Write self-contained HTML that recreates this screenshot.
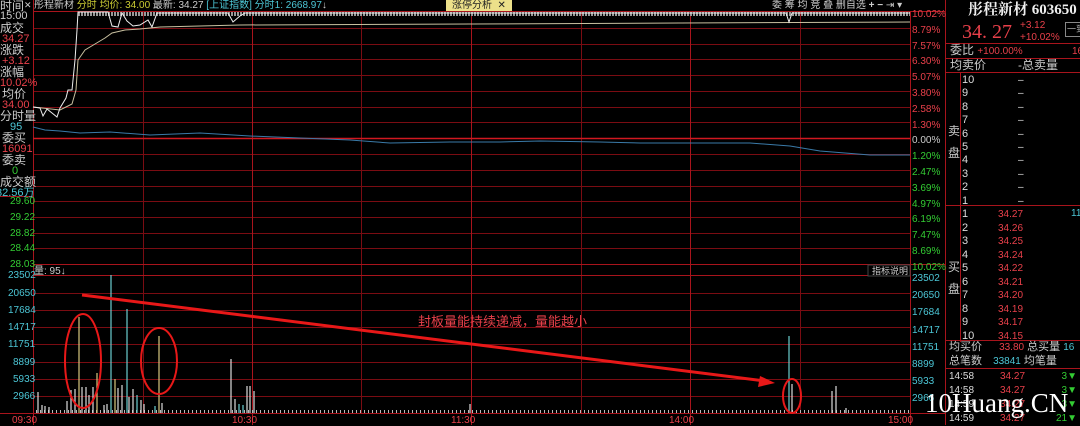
<!DOCTYPE html>
<html><head><meta charset="utf-8"><style>
body{margin:0;background:#000;width:1080px;height:425px;overflow:hidden;position:relative;font-family:"Liberation Sans","Noto Sans CJK SC",sans-serif}
.t{position:absolute;font-size:11px;line-height:11px;white-space:nowrap}
.w{color:#ccc}.r{color:#e8404a}.g{color:#3c3}.c{color:#4cc6d6}.y{color:#ddd}
.L{font-size:12px;line-height:12px}
</style></head><body>
<svg width="1080" height="425" style="position:absolute;left:0;top:0">
<g stroke="#7a0c12" stroke-width="1">
<line x1="33" y1="28.5" x2="910" y2="28.5"/><line x1="33" y1="44.5" x2="910" y2="44.5"/><line x1="33" y1="59.5" x2="910" y2="59.5"/><line x1="33" y1="75.5" x2="910" y2="75.5"/><line x1="33" y1="91.5" x2="910" y2="91.5"/><line x1="33" y1="107.5" x2="910" y2="107.5"/><line x1="33" y1="122.5" x2="910" y2="122.5"/>
<line x1="33" y1="154.5" x2="910" y2="154.5"/><line x1="33" y1="170.5" x2="910" y2="170.5"/><line x1="33" y1="186.5" x2="910" y2="186.5"/><line x1="33" y1="201.5" x2="910" y2="201.5"/><line x1="33" y1="217.5" x2="910" y2="217.5"/><line x1="33" y1="233.5" x2="910" y2="233.5"/><line x1="33" y1="248.5" x2="910" y2="248.5"/>
<line x1="33" y1="293.5" x2="910" y2="293.5"/><line x1="33" y1="310.5" x2="910" y2="310.5"/><line x1="33" y1="327.5" x2="910" y2="327.5"/><line x1="33" y1="344.5" x2="910" y2="344.5"/><line x1="33" y1="362.5" x2="910" y2="362.5"/><line x1="33" y1="379.5" x2="910" y2="379.5"/><line x1="33" y1="396.5" x2="910" y2="396.5"/>
<line x1="143.5" y1="11" x2="143.5" y2="413"/><line x1="361.5" y1="11" x2="361.5" y2="413"/><line x1="581.5" y1="11" x2="581.5" y2="413"/><line x1="800.5" y1="11" x2="800.5" y2="413"/>
</g>
<g stroke="#a8141c" stroke-width="1">
<line x1="33" y1="11.5" x2="945" y2="11.5"/><line x1="33" y1="264.5" x2="945" y2="264.5"/><line x1="33" y1="275.5" x2="910" y2="275.5"/><line x1="0" y1="413.5" x2="945" y2="413.5"/>
<line x1="33.5" y1="0" x2="33.5" y2="425"/><line x1="252.5" y1="11" x2="252.5" y2="425"/><line x1="471.5" y1="11" x2="471.5" y2="425"/><line x1="690.5" y1="11" x2="690.5" y2="425"/><line x1="910.5" y1="11" x2="910.5" y2="425"/><line x1="945.5" y1="0" x2="945.5" y2="425"/>
<line x1="0" y1="196.5" x2="33" y2="196.5"/>
</g>
<line x1="33" y1="138.5" x2="910" y2="138.5" stroke="#d01820" stroke-width="1.5"/>
<line x1="78" y1="14" x2="910" y2="14" stroke="#999" stroke-width="4" stroke-dasharray="2 1"/>
<polyline fill="none" stroke="#c8c0a0" stroke-width="1" points="33,107 60,110 72,104 76,90 78,60 85,50 95,44 105,38 112,33 125,30 140,29 160,27 240,25 471,24 680,23 910,22"/>
<polyline fill="none" stroke="#eee" stroke-width="1" points="33,107 40,108 43,116 47,109 52,113 57,117 60,108 66,98 68,90 72,90 75,60 77,30 78,12 108,12 112,26 118,27 122,13 127,21 133,26 140,25 148,20 152,27 157,13 228,13 233,22 240,16 245,13 786,13 789,22 792,13 910,13"/>
<polyline fill="none" stroke="#3a7aa8" stroke-width="1" points="33,127 45,130 60,131 80,133 110,132 150,135 200,133 250,136 300,138 350,140 390,143 450,142 500,142 540,141 600,142 640,143 700,143 750,143 790,146 820,151 870,155 910,155"/>
<line x1="36" y1="411.5" x2="910" y2="411.5" stroke="#bbb" stroke-width="3" stroke-dasharray="1 3"/>
<g stroke-width="1.2">
<g stroke="#ddd">
<line x1="38" y1="413" x2="38" y2="392"/><line x1="42" y1="413" x2="42" y2="405"/><line x1="45" y1="413" x2="45" y2="406"/><line x1="49" y1="413" x2="49" y2="407"/><line x1="67" y1="413" x2="67" y2="401"/><line x1="71" y1="413" x2="71" y2="390"/><line x1="75" y1="413" x2="75" y2="389"/><line x1="82" y1="413" x2="82" y2="387"/><line x1="86" y1="413" x2="86" y2="387"/><line x1="89" y1="413" x2="89" y2="395"/><line x1="93" y1="413" x2="93" y2="387"/><line x1="104" y1="413" x2="104" y2="405"/><line x1="107" y1="413" x2="107" y2="404"/><line x1="118" y1="413" x2="118" y2="388"/><line x1="122" y1="413" x2="122" y2="385"/><line x1="129" y1="413" x2="129" y2="397"/><line x1="133" y1="413" x2="133" y2="389"/><line x1="141" y1="413" x2="141" y2="400"/><line x1="144" y1="413" x2="144" y2="404"/><line x1="162" y1="413" x2="162" y2="403"/><line x1="231" y1="413" x2="231" y2="359"/><line x1="235" y1="413" x2="235" y2="399"/><line x1="247" y1="413" x2="247" y2="386"/><line x1="250" y1="413" x2="250" y2="386"/><line x1="254" y1="413" x2="254" y2="391"/><line x1="470" y1="413" x2="470" y2="404"/><line x1="792" y1="413" x2="792" y2="384"/><line x1="832" y1="413" x2="832" y2="391"/><line x1="836" y1="413" x2="836" y2="386"/><line x1="846" y1="413" x2="846" y2="408"/>
</g>
<g stroke="#d8c880"><line x1="79" y1="413" x2="79" y2="317"/><line x1="97" y1="413" x2="97" y2="373"/><line x1="115" y1="413" x2="115" y2="379"/><line x1="159" y1="413" x2="159" y2="336"/></g>
<g stroke="#6ccfd0"><line x1="111" y1="413" x2="111" y2="275"/><line x1="127" y1="413" x2="127" y2="309"/><line x1="137" y1="413" x2="137" y2="395"/><line x1="155" y1="413" x2="155" y2="406"/><line x1="239" y1="413" x2="239" y2="404"/><line x1="243" y1="413" x2="243" y2="405"/><line x1="789" y1="413" x2="789" y2="336"/></g>
</g>
<g fill="none" stroke="#e81818" stroke-width="2">
<ellipse cx="83" cy="361" rx="18" ry="47"/><ellipse cx="159" cy="361" rx="18" ry="33"/><ellipse cx="792" cy="396" rx="9" ry="17"/>
</g>
<line x1="82" y1="295" x2="765" y2="381" stroke="#e81818" stroke-width="3"/>
<polygon points="775,383 760,376 758,387" fill="#e81818"/>
<rect x="868" y="265" width="42" height="11" fill="#000" stroke="#444"/>
</svg>
<div class="t w L" style="left:0;top:0">时间</div><div class="t w" style="left:24px;top:0;font-size:9px">✕</div>
<div class="t w" style="left:34px;top:0;font-size:10px">彤程新材 <span style="color:#cc3">分时</span> <span style="color:#cc3">均价: 34.00</span> 最新: 34.27 <span class="c">[上证指数]</span> <span class="c">分时1: 2668.97</span>↓</div>
<div class="t" style="left:446px;top:0;background:#ece08a;color:#222;font-size:10px;padding:0 6px;height:11px">涨停分析 &nbsp;✕</div>
<div class="t w" style="left:772px;top:0;font-size:10px">委 筹 均 竞 叠 删自选 <b>+</b> <b>−</b> ⇥ ▾</div>
<div class="t w" style="left:0;top:11px">15:00</div>
<div class="t w L" style="left:0;top:22px">成交</div><div class="t r" style="left:2px;top:34px">34.27</div>
<div class="t w L" style="left:0;top:44px">涨跌</div><div class="t r" style="left:2px;top:56px">+3.12</div>
<div class="t w L" style="left:0;top:66px">涨幅</div><div class="t r" style="left:0;top:78px">10.02%</div>
<div class="t w L" style="left:2px;top:88px">均价</div><div class="t r" style="left:2px;top:100px">34.00</div>
<div class="t w L" style="left:0;top:110px">分时量</div><div class="t c" style="left:10px;top:122px">95</div>
<div class="t w L" style="left:2px;top:132px">委买</div><div class="t r" style="left:2px;top:144px">16091</div>
<div class="t w L" style="left:2px;top:154px">委卖</div><div class="t g" style="left:12px;top:166px">0</div>
<div class="t w L" style="left:0;top:176px">成交额</div><div class="t c" style="left:-4px;top:188px">32.56万</div>
<div class="t g" style="left:10px;top:196px;font-size:10px">29.60</div><div class="t g" style="left:10px;top:212px;font-size:10px">29.22</div><div class="t g" style="left:10px;top:228px;font-size:10px">28.82</div><div class="t g" style="left:10px;top:243px;font-size:10px">28.44</div><div class="t g" style="left:10px;top:259px;font-size:10px">28.03</div>
<div class="t c" style="left:8px;top:270px;font-size:10px">23502</div><div class="t c" style="left:8px;top:288px;font-size:10px">20650</div><div class="t c" style="left:8px;top:305px;font-size:10px">17684</div><div class="t c" style="left:8px;top:322px;font-size:10px">14717</div><div class="t c" style="left:8px;top:339px;font-size:10px">11751</div><div class="t c" style="left:13px;top:357px;font-size:10px">8899</div><div class="t c" style="left:13px;top:374px;font-size:10px">5933</div><div class="t c" style="left:13px;top:391px;font-size:10px">2966</div>
<div class="t w" style="left:34px;top:266px;font-size:10px">量: 95↓</div>
<div class="t w" style="left:872px;top:266px;font-size:9px">指标说明</div>
<div class="t r" style="left:12px;top:415px;font-size:10px">09:30</div><div class="t r" style="left:232px;top:415px;font-size:10px">10:30</div><div class="t r" style="left:451px;top:415px;font-size:10px">11:30</div><div class="t r" style="left:669px;top:415px;font-size:10px">14:00</div><div class="t r" style="left:888px;top:415px;font-size:10px">15:00</div>
<div class="t r" style="left:418px;top:315px;font-size:13px;line-height:14px">封板量能持续递减，量能越小</div>
<div style="position:absolute;left:912px;top:7px;font-size:10px;line-height:15.8px" class="r">10.02%<br>8.79%<br>7.57%<br>6.30%<br>5.07%<br>3.80%<br>2.58%<br>1.30%<br><span class="w">0.00%</span><br><span class="g">1.20%<br>2.47%<br>3.69%<br>4.97%<br>6.19%<br>7.47%<br>8.69%<br>10.02%</span></div>
<div style="position:absolute;left:912px;top:270px;font-size:10px;line-height:17.2px" class="c">23502<br>20650<br>17684<br>14717<br>11751<br>8899<br>5933<br>2966</div>
<div class="t" style="left:968px;top:2px;font-size:15px;line-height:16px;font-weight:bold;color:#eee;font-family:'Liberation Serif','Noto Serif CJK SC',serif">彤程新材 603650</div>
<div class="t r" style="left:962px;top:22px;font-size:20px;line-height:20px;font-family:'Liberation Serif',serif">34. 27</div>
<div class="t r" style="left:1020px;top:20px;font-size:10px;line-height:12px">+3.12<br>+10.02%</div>
<div class="t" style="left:1065px;top:22px;border:1px solid #888;color:#aaa;font-size:9px;padding:1px">一到</div>
<div style="position:absolute;left:946px;top:43px;width:134px;border-top:1px solid #a8141c"></div>
<div class="t w" style="left:950px;top:45px;font-size:12px">委比 <span class="r" style="font-size:10px">+100.00%</span></div><div class="t r" style="left:1072px;top:46px;font-size:10px">16</div>
<div style="position:absolute;left:946px;top:58px;width:134px;border-top:1px solid #a8141c"></div>
<div class="t w" style="left:950px;top:60px;font-size:12px">均卖价</div><div class="t w" style="left:1018px;top:60px;font-size:12px">-总卖量</div>
<div style="position:absolute;left:946px;top:72px;width:134px;border-top:1px solid #a8141c"></div>
<div style="position:absolute;left:959.5px;top:72px;height:270px;border-left:1px solid #a8141c"></div>
<div style="position:absolute;left:946px;top:205px;width:134px;border-top:1px solid #a8141c"></div>
<div style="position:absolute;left:962px;top:74px;font-size:11px;line-height:13.4px;color:#ddd">10<br>9<br>8<br>7<br>6<br>5<br>4<br>3<br>2<br>1</div>
<div style="position:absolute;left:1018px;top:74px;font-size:10px;line-height:13.4px;color:#ddd">–<br>–<br>–<br>–<br>–<br>–<br>–<br>–<br>–<br>–</div>
<div class="t w" style="left:948px;top:120px;font-size:12px;line-height:22px">卖<br>盘</div>
<div class="t w" style="left:948px;top:256px;font-size:12px;line-height:22px">买<br>盘</div>
<div style="position:absolute;left:962px;top:208px;font-size:11px;line-height:13.5px;color:#ddd">1<br>2<br>3<br>4<br>5<br>6<br>7<br>8<br>9<br>10</div>
<div style="position:absolute;left:998px;top:208px;font-size:10px;line-height:13.5px" class="r">34.27<br>34.26<br>34.25<br>34.24<br>34.22<br>34.21<br>34.20<br>34.19<br>34.17<br>34.15</div>
<div class="t c" style="left:1071px;top:208px;font-size:10px">11</div>
<div style="position:absolute;left:946px;top:340px;width:134px;border-top:1px solid #a8141c"></div>
<div class="t w" style="left:949px;top:342px;font-size:11px">均买价 <span class="r" style="font-size:10px;margin-left:14px">33.80</span> 总买量 <span class="c" style="font-size:10px">16</span></div>
<div class="t w" style="left:949px;top:356px;font-size:11px">总笔数 <span class="c" style="font-size:10px;margin-left:8px">33841</span> 均笔量</div>
<div style="position:absolute;left:946px;top:368px;width:134px;border-top:1px solid #a8141c"></div>
<div style="position:absolute;left:949px;top:370px;font-size:10px;line-height:14px;color:#ddd">14:58<br>14:58<br>14:59<br>14:59</div>
<div style="position:absolute;left:1000px;top:370px;font-size:10px;line-height:14px" class="r">34.27<br>34.27<br>34.27<br>34.27</div>
<div style="position:absolute;left:1055px;top:370px;font-size:10px;line-height:14px;text-align:right;width:22px" class="g">3▼<br>3▼<br>3▼<br>21▼</div>
<div class="t" style="left:925px;top:388px;font-size:27px;line-height:30px;color:#fff;font-family:'Liberation Serif',serif">10Huang.CN</div>
</body></html>
